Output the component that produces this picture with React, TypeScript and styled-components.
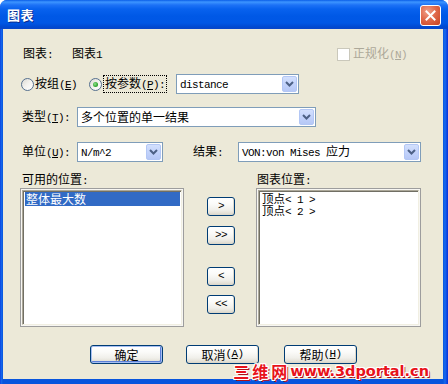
import React from "react";
import styled, { createGlobalStyle } from "styled-components";

const Global = createGlobalStyle`
  html, body { margin: 0; padding: 0; background: #ffffff; }
  body {
    font-family: "Noto Sans CJK SC", "Noto Sans", sans-serif;
    font-size: 12px;
    color: #000;
  }
  * { box-sizing: border-box; }
`;

const Window = styled.div`
  position: relative;
  width: 448px;
  height: 384px;
  display: flex;
  flex-direction: column;
  background: linear-gradient(to right, #0831d9 0px, #166aee 1px, #0855dd 3px, #0855dd 443px, #166aee 445px, #0831d9 448px);
  border-radius: 7px 7px 0 0;
  overflow: hidden;
`;

const TitleBar = styled.div`
  height: 29px;
  flex: none;
  display: flex;
  align-items: center;
  padding-left: 7px;
  background: linear-gradient(
    to bottom,
    #0a5ee8 0px,
    #3d95ff 2px,
    #1d72f6 5px,
    #0862ee 9px,
    #0058e6 16px,
    #0057e5 23px,
    #0049d0 27px,
    #0a46c8 29px
  );
`;

const TitleText = styled.span`
  color: #fff;
  font-weight: 700;
  font-size: 13px;
  line-height: 15px;
  letter-spacing: 0.5px;
  text-shadow: 1px 1px 0 #0b2c8c;
`;

const CloseButton = styled.div`
  margin-left: auto;
  margin-right: 7px;
  margin-top: 1px;
  width: 21px;
  height: 21px;
  border: 1px solid #fff;
  border-radius: 3px;
  background: radial-gradient(circle at 35% 30%, #f0a08a 0%, #e06a4c 45%, #c9411f 100%);
  display: flex;
  align-items: center;
  justify-content: center;
`;

const Client = styled.div`
  flex: 1;
  margin: 0 5px 5px 3px;
  background: #ece9d8;
  display: flex;
  flex-direction: column;
`;

const Row = styled.div<{ $mt: number; $pl: number; $h: number }>`
  display: flex;
  align-items: center;
  margin-top: ${(p) => p.$mt}px;
  padding-left: ${(p) => p.$pl}px;
  height: ${(p) => p.$h}px;
  flex: none;
`;

const Latin = styled.span`
  font-family: "Liberation Mono", "DejaVu Sans Mono", monospace;
  font-size: 11px;
  letter-spacing: -0.6px;
`;

const FieldLabel = styled.span<{ $w: number }>`
  width: ${(p) => p.$w}px;
  flex: none;
  line-height: 14px;
  white-space: nowrap;
`;

const CheckGroup = styled.div`
  display: flex;
  align-items: center;
  gap: 3px;
`;

const CheckBox = styled.span`
  width: 13px;
  height: 13px;
  border: 1px solid #cac8bb;
  background: #fff;
  flex: none;
`;

const DisabledText = styled.span`
  color: #aca899;
  line-height: 14px;
  white-space: nowrap;
`;

const RadioOption = styled.div<{ $w: number }>`
  width: ${(p) => p.$w}px;
  flex: none;
  display: flex;
  align-items: center;
`;

const Radio = styled.span<{ $checked?: boolean }>`
  width: 13px;
  height: 13px;
  flex: none;
  border-radius: 50%;
  border: 1px solid #55708f;
  background: linear-gradient(135deg, #dcdad3 0%, #f4f3ef 50%, #ffffff 100%);
  display: flex;
  align-items: center;
  justify-content: center;
  &::after {
    content: "";
    display: ${(p) => (p.$checked ? "block" : "none")};
    width: 5px;
    height: 5px;
    border-radius: 50%;
    background: radial-gradient(circle at 40% 40%, #8ee28a 0%, #35a635 60%, #218c21 100%);
  }
`;

const RadioLabel = styled.span<{ $focused?: boolean }>`
  margin-left: ${(p) => (p.$focused ? 2 : 1)}px;
  padding: ${(p) => (p.$focused ? "0 1px" : "0")};
  line-height: 14px;
  white-space: nowrap;
  outline: ${(p) => (p.$focused ? "1px dotted #000" : "none")};
  outline-offset: 0px;
`;

const ComboBox = styled.div<{ $w: number; $ml?: number }>`
  width: ${(p) => p.$w}px;
  margin-left: ${(p) => p.$ml ?? 0}px;
  height: 20px;
  flex: none;
  border: 1px solid #7f9db9;
  background: #fff;
  padding: 1px;
  display: flex;
  align-items: center;
`;

const ComboText = styled.div`
  flex: 1;
  min-width: 0;
  padding-left: 2px;
  line-height: 16px;
  white-space: nowrap;
  overflow: hidden;
`;

const ComboArrow = styled.div`
  width: 15px;
  height: 16px;
  flex: none;
  border: 1px solid #b3c7f5;
  border-radius: 2px;
  background: linear-gradient(to bottom, #d3e0fd 0%, #c3d3fb 50%, #b6c8f6 100%);
  display: flex;
  align-items: center;
  justify-content: center;
`;

const ResultLabel = styled.span`
  margin-left: 30px;
  width: 45px;
  flex: none;
  line-height: 14px;
`;

const ListArea = styled.div`
  display: flex;
  margin-top: 2px;
  padding-left: 17px;
  height: 139px;
  flex: none;
`;

const ListBox = styled.div<{ $w: number }>`
  width: ${(p) => p.$w}px;
  height: 139px;
  flex: none;
  border: 1px solid #9d9d9d;
  padding: 1px;
  background: #f7f6f2;
`;

const ListInner = styled.div<{ $pt?: number }>`
  height: 100%;
  background: #fff;
  border: 1px solid;
  border-color: #aca899 #f1efe2 #f1efe2 #aca899;
  box-shadow: inset 1px 1px 0 #716f64;
  padding: ${(p) => p.$pt ?? 1}px 1px 0 2px;
`;

const ListItem = styled.div<{ $selected?: boolean; $lh: number; $fs?: number }>`
  font-size: ${(p) => p.$fs ?? 12}px;
  line-height: ${(p) => p.$lh}px;
  height: ${(p) => p.$lh}px;
  padding-left: 1px;
  white-space: nowrap;
  background: ${(p) => (p.$selected ? "#316ac5" : "transparent")};
  color: ${(p) => (p.$selected ? "#fff" : "#000")};
`;

const MoveColumn = styled.div`
  width: 28px;
  margin: 0 21px 0 23px;
  flex: none;
  display: flex;
  flex-direction: column;
`;

const Btn = styled.div<{ $w: number; $mt?: number; $ml?: number; $default?: boolean }>`
  width: ${(p) => p.$w}px;
  height: 19px;
  flex: none;
  margin-top: ${(p) => p.$mt ?? 0}px;
  margin-left: ${(p) => p.$ml ?? 0}px;
  border: 1px solid #003c74;
  border-radius: 3px;
  background: linear-gradient(to bottom, #ffffff 0%, #fbfbf9 35%, #f0efea 70%, #e3e0d6 90%, #d6d0c5 100%);
  box-shadow: ${(p) =>
    p.$default
      ? "inset 0 0 0 1px #a7bff2, inset -1px -1px 0 1px #5c7fd8"
      : "inset -1px -1px 0 #dcd8cb"};
  display: flex;
  align-items: center;
  justify-content: center;
  line-height: 15px;
  white-space: nowrap;
  color: #000;
`;

const ButtonRow = styled.div`
  display: flex;
  margin-top: 18px;
  padding-left: 87px;
  height: 19px;
  flex: none;
`;

const Watermark = styled.div`
  position: absolute;
  right: 19px;
  bottom: 6px;
  height: 14px;
  display: flex;
  align-items: flex-end;
  color: #e8131b;
  font-weight: 700;
  white-space: nowrap;
  text-shadow:
    1px 0 0 #fff, -1px 0 0 #fff, 0 1px 0 #fff, 0 -1px 0 #fff,
    1px 1px 0 #fff, -1px -1px 0 #fff, 1px -1px 0 #fff, -1px 1px 0 #fff,
    2px 2px 0 #b01018;
`;

const WatermarkCJK = styled.span`
  font-family: "Noto Sans CJK SC", sans-serif;
  font-size: 16px;
  letter-spacing: 3px;
  line-height: 14px;
`;

const WatermarkURL = styled.span`
  font-family: "DejaVu Sans", sans-serif;
  font-size: 14.5px;
  line-height: 14px;
`;

const Chevron = () => (
  <svg width="9" height="6" viewBox="0 0 9 6">
    <path d="M1 1 L4.5 4.5 L8 1" fill="none" stroke="#4d6185" strokeWidth="2" />
  </svg>
);

const Combo = ({ w, ml, children }: { w: number; ml?: number; children: React.ReactNode }) => (
  <ComboBox $w={w} $ml={ml}>
    <ComboText>{children}</ComboText>
    <ComboArrow>
      <Chevron />
    </ComboArrow>
  </ComboBox>
);

export default function App() {
  return (
    <>
      <Global />
      <Window>
        <TitleBar>
          <TitleText>图表</TitleText>
          <CloseButton aria-label="关闭">
            <svg width="11" height="11" viewBox="0 0 11 11">
              <path d="M1.5 1.5 L9.5 9.5 M9.5 1.5 L1.5 9.5" stroke="#fff" strokeWidth="2" strokeLinecap="square" />
            </svg>
          </CloseButton>
        </TitleBar>
        <Client>
          <Row $mt={18} $pl={20} $h={14}>
            <FieldLabel $w={49}>
              图表<Latin>:</Latin>
            </FieldLabel>
            <FieldLabel $w={265}>
              图表<Latin>1</Latin>
            </FieldLabel>
            <CheckGroup>
              <CheckBox />
              <DisabledText>
                正规化<Latin>
                  (<u>N</u>)
                </Latin>
              </DisabledText>
            </CheckGroup>
          </Row>

          <Row $mt={13} $pl={18} $h={20}>
            <RadioOption $w={68}>
              <Radio />
              <RadioLabel>
                按组<Latin>
                  (<u>E</u>)
                </Latin>
              </RadioLabel>
            </RadioOption>
            <RadioOption $w={87}>
              <Radio $checked />
              <RadioLabel $focused>
                按参数<Latin>
                  (<u>P</u>):
                </Latin>
              </RadioLabel>
            </RadioOption>
            <Combo w={123}>
              <Latin>distance</Latin>
            </Combo>
          </Row>

          <Row $mt={13} $pl={19} $h={20}>
            <FieldLabel $w={55}>
              类型<Latin>
                (<u>T</u>):
              </Latin>
            </FieldLabel>
            <Combo w={239}>多个位置的单一结果</Combo>
          </Row>

          <Row $mt={15} $pl={19} $h={20}>
            <FieldLabel $w={55}>
              单位<Latin>
                (<u>U</u>):
              </Latin>
            </FieldLabel>
            <Combo w={86}>
              <Latin>N/m^2</Latin>
            </Combo>
            <ResultLabel>
              结果<Latin>:</Latin>
            </ResultLabel>
            <Combo w={183}>
              <Latin>VON:von Mises </Latin>应力
            </Combo>
          </Row>

          <Row $mt={11} $pl={19} $h={13}>
            <FieldLabel $w={235}>
              可用的位置<Latin>:</Latin>
            </FieldLabel>
            <FieldLabel $w={120}>
              图表位置<Latin>:</Latin>
            </FieldLabel>
          </Row>

          <ListArea>
            <ListBox $w={164}>
              <ListInner>
                <ListItem $selected $lh={14}>
                  整体最大数
                </ListItem>
              </ListInner>
            </ListBox>
            <MoveColumn>
              <Btn $w={28} $mt={9}>
                <Latin>&gt;</Latin>
              </Btn>
              <Btn $w={28} $mt={10}>
                <Latin>&gt;&gt;</Latin>
              </Btn>
              <Btn $w={28} $mt={22}>
                <Latin>&lt;</Latin>
              </Btn>
              <Btn $w={28} $mt={9}>
                <Latin>&lt;&lt;</Latin>
              </Btn>
            </MoveColumn>
            <ListBox $w={165}>
              <ListInner $pt={1}>
                <ListItem $lh={12} $fs={11.5}>
                  顶点<Latin>&lt; 1 &gt;</Latin>
                </ListItem>
                <ListItem $lh={12} $fs={11.5}>
                  顶点<Latin>&lt; 2 &gt;</Latin>
                </ListItem>
              </ListInner>
            </ListBox>
          </ListArea>

          <ButtonRow>
            <Btn $w={73} $default>
              确定
            </Btn>
            <Btn $w={73} $ml={23}>
              取消<Latin>
                (<u>A</u>)
              </Latin>
            </Btn>
            <Btn $w={73} $ml={25}>
              帮助<Latin>
                (<u>H</u>)
              </Latin>
            </Btn>
          </ButtonRow>
        </Client>
        <Watermark>
          <WatermarkCJK>三维网</WatermarkCJK>
          <WatermarkURL>www.3dportal.cn</WatermarkURL>
        </Watermark>
      </Window>
    </>
  );
}
